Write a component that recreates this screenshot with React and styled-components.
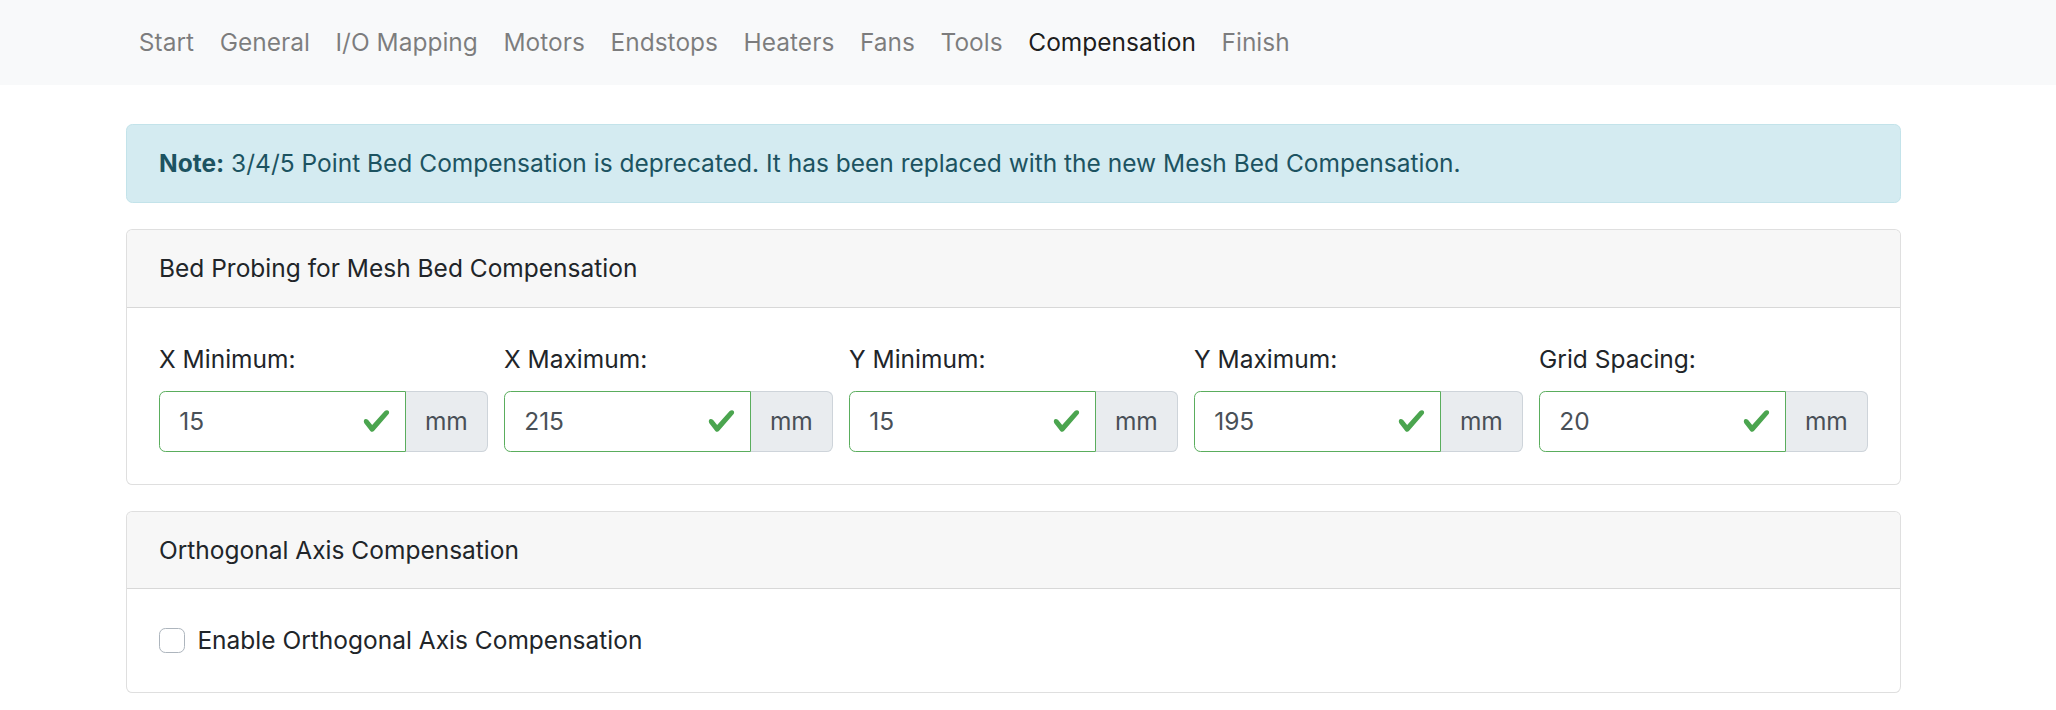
import styled, { createGlobalStyle } from "styled-components";

const GlobalStyle = createGlobalStyle`
  * { box-sizing: border-box; }
  body {
    margin: 0;
    background: #fff;
    color: #212529;
    font-family: Inter, "Noto Sans", sans-serif;
    font-size: 24.5px;
    line-height: 38.4px;
  }
`;

const navItems = [
  "Start",
  "General",
  "I/O Mapping",
  "Motors",
  "Endstops",
  "Heaters",
  "Fans",
  "Tools",
  "Compensation",
  "Finish",
];

const probeFields = [
  { label: "X Minimum:", value: "15" },
  { label: "X Maximum:", value: "215" },
  { label: "Y Minimum:", value: "15" },
  { label: "Y Maximum:", value: "195" },
  { label: "Grid Spacing:", value: "20" },
];

function CheckIcon() {
  return (
    <CheckSvg viewBox="0 0 8 8">
      <path
        fill="#4ba54f"
        d="M2.3 6.73L.6 4.53c-.4-1.04.46-1.4 1.1-.8l1.1 1.4 3.4-3.8c.6-.63 1.6-.27 1.2.7l-4 4.6c-.43.5-.8.4-1.1.1z"
      />
    </CheckSvg>
  );
}

function MmField({ label, value }) {
  return (
    <FieldStyled>
      <LabelStyled>{label}</LabelStyled>
      <InputGroup>
        <InputWrap>
          <InputStyled type="text" defaultValue={value} />
          <CheckIcon />
        </InputWrap>
        <Addon>mm</Addon>
      </InputGroup>
    </FieldStyled>
  );
}

export default function App() {
  return (
    <>
      <GlobalStyle />
      <NavBar>
        <Container>
          <NavList>
            {navItems.map((item) => (
              <NavLink key={item} $active={item === "Compensation"}>
                {item}
              </NavLink>
            ))}
          </NavList>
        </Container>
      </NavBar>

      <Main>
        <Alert>
          <strong>Note:</strong> 3/4/5 Point Bed Compensation is deprecated. It
          has been replaced with the new Mesh Bed Compensation.
        </Alert>

        <Card>
          <CardHeader>Bed Probing for Mesh Bed Compensation</CardHeader>
          <CardBody>
            <FieldRow>
              {probeFields.map((f) => (
                <MmField key={f.label} label={f.label} value={f.value} />
              ))}
            </FieldRow>
          </CardBody>
        </Card>

        <Card>
          <CardHeader>Orthogonal Axis Compensation</CardHeader>
          <CardBody>
            <CheckLabel>
              <CheckBox type="checkbox" />
              Enable Orthogonal Axis Compensation
            </CheckLabel>
          </CardBody>
        </Card>
      </Main>
    </>
  );
}

const Container = styled.div`
  width: 1775px;
  margin-left: 126px;
`;

const NavBar = styled.nav`
  background: #f8f9fa;
  height: 85px;
  display: flex;
  align-items: center;
`;

const NavList = styled.div`
  display: flex;
  align-items: center;
`;

const NavLink = styled.a`
  padding: 0 12.8px;
  color: ${(p) => (p.$active ? "rgba(0, 0, 0, 0.9)" : "rgba(0, 0, 0, 0.5)")};
  text-decoration: none;
  cursor: pointer;
`;

const Main = styled(Container)`
  margin-top: 39px;
  display: flex;
  flex-direction: column;
  gap: 26px;
`;

const Alert = styled.div`
  background: #d4ebf1;
  border: 1.6px solid #c3e3ea;
  border-radius: 6.4px;
  color: #1c5361;
  padding: 19.2px 32px;

  strong {
    font-weight: 700;
  }
`;

const Card = styled.div`
  border: 1.6px solid rgba(0, 0, 0, 0.125);
  border-radius: 6.4px;
  background: #fff;
  overflow: hidden;
`;

const CardHeader = styled.div`
  background: #f7f7f7;
  border-bottom: 1.6px solid rgba(0, 0, 0, 0.125);
  padding: 19.2px 32px;
`;

const CardBody = styled.div`
  padding: 32px;
`;

const FieldRow = styled.div`
  display: grid;
  grid-template-columns: repeat(5, 1fr);
  column-gap: 16px;
`;

const FieldStyled = styled.div`
  display: flex;
  flex-direction: column;
`;

const LabelStyled = styled.label`
  margin-bottom: 12.8px;
`;

const InputGroup = styled.div`
  display: flex;
  height: 60.8px;
`;

const InputWrap = styled.div`
  position: relative;
  flex: 1;
  display: flex;
`;

const InputStyled = styled.input`
  width: 100%;
  font: inherit;
  color: #495057;
  border: 1.6px solid #5aad5d;
  border-right-width: 1.6px;
  border-radius: 6.4px 0 0 6.4px;
  padding: 9.6px 56px 9.6px 19.2px;
  outline: none;
  background: #fff;
`;

const CheckSvg = styled.svg`
  position: absolute;
  right: 15px;
  top: 50%;
  width: 29px;
  height: 29px;
  transform: translateY(-50%);
`;

const Addon = styled.span`
  display: flex;
  align-items: center;
  padding: 0 19.2px;
  color: #495057;
  background: #e9ecef;
  border: 1.6px solid #ced4da;
  border-left: none;
  border-radius: 0 6.4px 6.4px 0;
`;

const CheckLabel = styled.label`
  position: relative;
  display: block;
  padding-left: 38.4px;
`;

const CheckBox = styled.input`
  appearance: none;
  position: absolute;
  left: 0;
  top: 6.4px;
  width: 25.6px;
  height: 25.6px;
  margin: 0;
  border: 1.6px solid #adb5bd;
  border-radius: 6.4px;
  background: #fff;
`;
